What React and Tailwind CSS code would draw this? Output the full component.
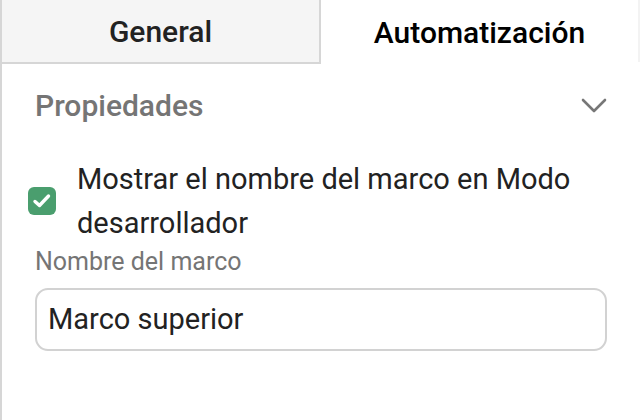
export default function App() {
  return (
    <div
      className="w-[640px] h-[420px] bg-white border-l-2 border-[#d6d6d6] flex flex-col overflow-hidden"
      style={{ fontFamily: "Roboto, 'Liberation Sans', sans-serif" }}
    >
      <div className="flex h-[64px] shrink-0">
        <div className="w-[319px] bg-[#f5f5f5] border-b-2 border-r-2 border-[#d6d6d6] flex items-center justify-center text-[30px] font-medium text-[#222]">
          General
        </div>
        <div className="flex-1 h-[62px] border-r-2 border-[#f3f3f3] flex items-center justify-center text-[30px] font-medium text-black pt-[2px]">
          Automatización
        </div>
      </div>
      <div className="flex flex-col pl-[33px] pr-[30px]">
        <div className="mt-[26px] h-[32px] flex items-center justify-between">
          <span className="text-[30px] font-medium text-[#757575] leading-[32px]">Propiedades</span>
          <svg width="26" height="16" viewBox="0 0 26 16" className="mr-[3px]">
            <path d="M2 2 L13 13 L24 2" fill="none" stroke="#777" strokeWidth="2.6" strokeLinecap="round" strokeLinejoin="round" />
          </svg>
        </div>
        <div className="mt-[35px] flex items-center -ml-[7px]">
          <div className="w-[28px] h-[28px] rounded-[6px] bg-[#4a9e6e] flex items-center justify-center shrink-0">
            <svg width="20" height="16" viewBox="0 0 20 16">
              <path d="M3 8.5 L7.5 12.5 L16.5 3" fill="none" stroke="white" strokeWidth="3.4" strokeLinecap="round" strokeLinejoin="round" />
            </svg>
          </div>
          <div className="ml-[21px] text-[29px] leading-[44px] text-[#222]">
            Mostrar el nombre del marco en Modo
            <br />
            desarrollador
          </div>
        </div>
        <div className="mt-[3px] text-[25px] leading-[28px] text-[#757575]">Nombre del marco</div>
        <div className="mt-[12px] h-[63px] w-[572px] border-2 border-[#d2d2d2] rounded-[13px] flex items-center pl-[11px] text-[29px] text-[#222]">
          Marco superior
        </div>
      </div>
    </div>
  );
}
